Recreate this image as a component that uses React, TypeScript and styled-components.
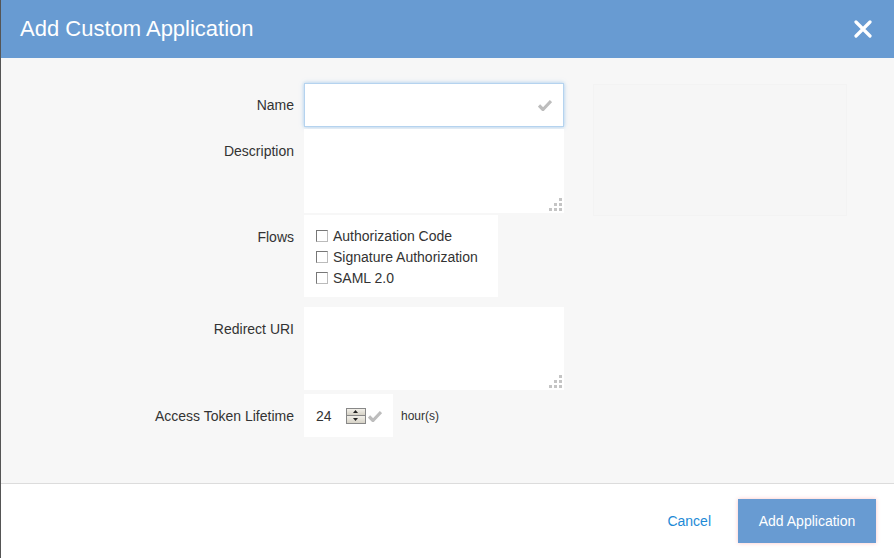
import React from "react";
import styled, { createGlobalStyle } from "styled-components";

const GlobalStyle = createGlobalStyle`
  html, body {
    margin: 0;
    padding: 0;
    height: 100%;
    background: #fff;
  }
  body {
    font-family: "Liberation Sans", Arial, sans-serif;
    color: #333;
  }
`;

const Dialog = styled.div`
  width: 894px;
  height: 558px;
  display: flex;
  flex-direction: column;
  border-left: 1px solid #555;
  box-sizing: border-box;
`;

const Header = styled.div`
  height: 58px;
  flex: none;
  background: #689bd2;
  display: flex;
  align-items: center;
  justify-content: space-between;
  padding: 0 21px 0 19px;
  > h1 {
    margin: 0;
    font-size: 22px;
    font-weight: normal;
    color: #fff;
  }
`;

const CloseButton = styled.button`
  background: none;
  border: none;
  padding: 0;
  width: 20px;
  height: 20px;
  display: flex;
  align-items: center;
  justify-content: center;
  cursor: pointer;
`;

const Body = styled.div`
  flex: 1;
  background: #f7f7f7;
  border-bottom: 1px solid #dcdcdc;
  padding-top: 25px;
  position: relative;
`;

const Form = styled.div`
  display: grid;
  grid-template-columns: 293px auto;
  column-gap: 10px;
  align-items: start;
`;

const Label = styled.div<{ $mt?: number }>`
  text-align: right;
  font-size: 14px;
  line-height: 16px;
  padding-top: 14px;
  margin-top: ${(p) => p.$mt || 0}px;
  color: #333;
`;

const Field = styled.div<{ $w: number; $h: number; $mt?: number; $focus?: boolean }>`
  position: relative;
  width: ${(p) => p.$w}px;
  height: ${(p) => p.$h}px;
  margin-top: ${(p) => p.$mt || 0}px;
  background: #fff;
  box-sizing: border-box;
  border: 1px solid ${(p) => (p.$focus ? "#b5d3ef" : "#fff")};
  box-shadow: ${(p) => (p.$focus ? "0 0 4px rgba(102, 170, 230, 0.6)" : "none")};
`;

const CheckMark = styled.span`
  position: absolute;
  right: 11px;
  top: 50%;
  transform: translateY(-50%);
  display: flex;
`;

const Grip = styled.span`
  position: absolute;
  right: 0;
  bottom: 0;
  display: flex;
`;

const FlowBox = styled.div`
  width: 194px;
  height: 82px;
  margin-top: 2px;
  background: #fff;
  box-sizing: border-box;
  padding: 13px 0 0 12px;
  display: flex;
  flex-direction: column;
  gap: 5px;
`;

const Option = styled.label`
  display: flex;
  align-items: center;
  gap: 5px;
  font-size: 14px;
  line-height: 16px;
  color: #333;
`;

const Box = styled.span`
  width: 10px;
  height: 10px;
  border: 1px solid #777;
  border-right-color: #bbb;
  border-bottom-color: #bbb;
  background: #fff;
  flex: none;
`;

const LifetimeRow = styled.div`
  display: flex;
  align-items: center;
  gap: 8px;
  margin-top: 4px;
  > span {
    font-size: 12px;
    color: #333;
  }
`;

const NumberBox = styled.div`
  width: 89px;
  height: 43px;
  background: #fff;
  display: flex;
  align-items: center;
  padding-left: 12px;
  box-sizing: border-box;
  font-size: 14px;
  color: #333;
  gap: 14px;
`;

const SpinGroup = styled.span`
  display: flex;
  align-items: center;
  gap: 2px;
`;

const Spinner = styled.span`
  width: 20px;
  height: 16px;
  display: flex;
  flex-direction: column;
  border: 1px solid #888;
  box-sizing: border-box;
  > i {
    flex: 1;
    background: linear-gradient(#f2f0ea, #d6d2c6);
    display: flex;
    align-items: center;
    justify-content: center;
  }
  > i + i {
    border-top: 1px solid #888;
  }
`;

const Ghost = styled.div`
  position: absolute;
  left: 592px;
  top: 26px;
  width: 252px;
  height: 130px;
  background: #f6f6f6;
  border: 1px solid #f3f3f3;
`;

const Footer = styled.div`
  height: 74px;
  flex: none;
  background: #fff;
  display: flex;
  align-items: center;
  justify-content: flex-end;
  padding-right: 18px;
  gap: 27px;
`;

const CancelLink = styled.a`
  color: #1d8ad6;
  font-size: 14px;
  cursor: pointer;
`;

const PrimaryButton = styled.button`
  width: 138px;
  height: 44px;
  background: #689bd2;
  border: none;
  color: #fff;
  font-family: inherit;
  font-size: 14px;
  box-shadow: 0 0 4px rgba(255, 90, 90, 0.35);
  cursor: pointer;
`;

const Check = () => (
  <svg width="14" height="12" viewBox="0 0 14 12">
    <path d="M1 6.5 L5 10.5 L13 2" fill="none" stroke="#bdbdbd" strokeWidth="3.2" strokeLinejoin="round" />
  </svg>
);

const ResizeDots = () => (
  <svg width="16" height="16" viewBox="0 0 16 16">
    {[
      [12, 2],
      [7, 7],
      [12, 7],
      [2, 12],
      [7, 12],
      [12, 12],
    ].map(([x, y]) => (
      <rect key={`${x}-${y}`} x={x} y={y} width="3" height="3" fill="#c4c4c4" />
    ))}
  </svg>
);

const flows = ["Authorization Code", "Signature Authorization", "SAML 2.0"];

export default function App() {
  return (
    <>
      <GlobalStyle />
      <Dialog>
        <Header>
          <h1>Add Custom Application</h1>
          <CloseButton aria-label="close">
            <svg width="18" height="18" viewBox="0 0 18 18">
              <path d="M2 2 L16 16 M16 2 L2 16" stroke="#fff" strokeWidth="3.2" strokeLinecap="round" />
            </svg>
          </CloseButton>
        </Header>
        <Body>
          <Ghost />
          <Form>
            <Label>Name</Label>
            <Field $w={260} $h={44} $focus>
              <CheckMark>
                <Check />
              </CheckMark>
            </Field>

            <Label $mt={2}>Description</Label>
            <Field $w={260} $h={84} $mt={2}>
              <Grip>
                <ResizeDots />
              </Grip>
            </Field>

            <Label $mt={2}>Flows</Label>
            <FlowBox>
              {flows.map((f) => (
                <Option key={f}>
                  <Box />
                  {f}
                </Option>
              ))}
            </FlowBox>

            <Label $mt={10}>Redirect URI</Label>
            <Field $w={260} $h={83} $mt={10}>
              <Grip>
                <ResizeDots />
              </Grip>
            </Field>

            <Label $mt={4}>Access Token Lifetime</Label>
            <LifetimeRow>
              <NumberBox>
                24
                <SpinGroup>
                  <Spinner>
                    <i>
                      <svg width="5" height="3" viewBox="0 0 5 3">
                        <path d="M2.5 0 L5 3 L0 3 Z" fill="#222" />
                      </svg>
                    </i>
                    <i>
                      <svg width="5" height="3" viewBox="0 0 5 3">
                        <path d="M0 0 L5 0 L2.5 3 Z" fill="#222" />
                      </svg>
                    </i>
                  </Spinner>
                  <Check />
                </SpinGroup>
              </NumberBox>
              <span>hour(s)</span>
            </LifetimeRow>
          </Form>
        </Body>
        <Footer>
          <CancelLink>Cancel</CancelLink>
          <PrimaryButton>Add Application</PrimaryButton>
        </Footer>
      </Dialog>
    </>
  );
}
